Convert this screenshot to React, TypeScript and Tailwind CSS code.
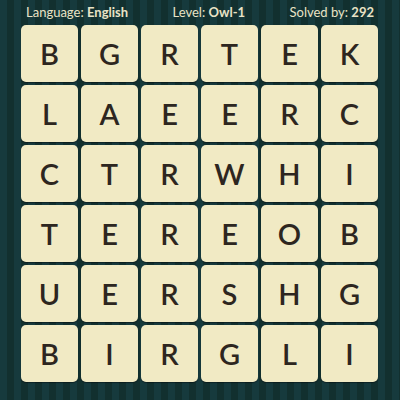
const rows = ["BGRTEK", "LAEERC", "CTRWHI", "TEREOB", "UERSHG", "BIRGLI"];

const font = { fontFamily: "Lato, 'Open Sans', sans-serif" };

export default function App() {
  return (
    <div
      className="w-[400px] h-[400px] overflow-hidden bg-[repeating-linear-gradient(90deg,#163a3d_0px,#163a3d_7px,#12302f_7px,#12302f_14px)]"
      style={font}
    >
      {/* header */}
      <div className="h-[25px] flex items-center justify-between pl-[26px] pr-[26px] text-[13px] text-[#e9e3c6]">
        <span>
          Language: <b className="font-bold">English</b>
        </span>
        <span>
          Level: <b className="font-bold">Owl-1</b>
        </span>
        <span>
          Solved by: <b className="font-bold">292</b>
        </span>
      </div>

      {/* board */}
      <div className="ml-[21px] grid grid-cols-[repeat(6,57px)] gap-[3px]">
        {rows.map((row, r) =>
          row.split("").map((ch, c) => (
            <div
              key={`${r}-${c}`}
              className="w-[57px] h-[57px] rounded-[5px] bg-[#f1eac4] flex items-center justify-center text-[29px] font-semibold text-[#2d2620] shadow-[0_1px_1px_rgba(0,0,0,0.4)]"
            >
              {ch}
            </div>
          ))
        )}
      </div>
    </div>
  );
}
